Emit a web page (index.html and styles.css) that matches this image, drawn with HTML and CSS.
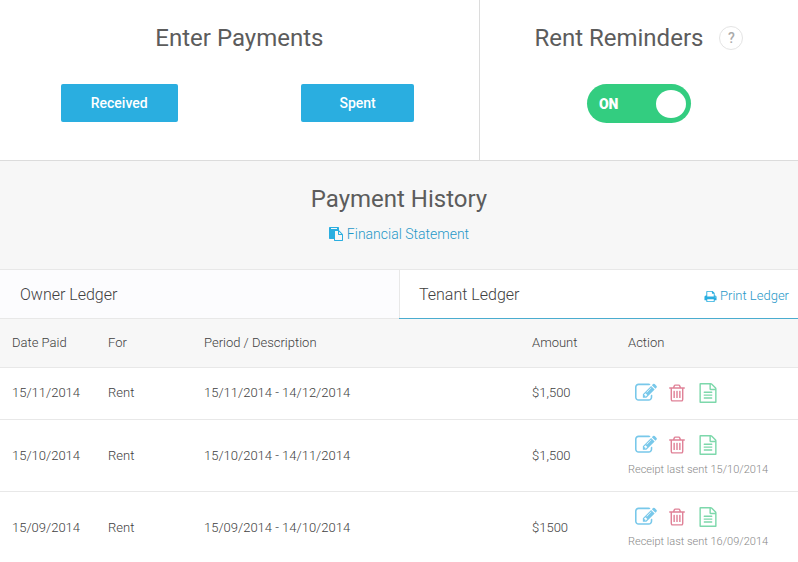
FILE: index.html
```html
<!DOCTYPE html>
<html lang="en">
<head>
<meta charset="utf-8">
<meta name="viewport" content="width=device-width, initial-scale=1">
<title>Payments</title>
<link rel="stylesheet" href="styles.css">
</head>
<body>
<svg class="sprite" aria-hidden="true">
  <symbol id="i-edit" viewBox="0 0 1792 1792"><path d="M888 1184l116-116-152-152-116 116v56h96v96h56zm440-720q-16-16-33 1l-350 350q-17 17-1 33t33-1l350-350q17-17 1-33zm80 594v190q0 119-84.5 203.5t-203.5 84.5h-832q-119 0-203.5-84.5t-84.5-203.5v-832q0-119 84.5-203.5t203.5-84.5h832q63 0 117 25 15 7 18 23 3 17-9 29l-49 49q-14 14-32 8-23-6-45-6h-832q-66 0-113 47t-47 113v832q0 66 47 113t113 47h832q66 0 113-47t47-113v-126q0-13 9-22l64-64q15-15 35-7t20 29zm-96-738l288 288-672 672h-288v-288zm444 132l-92 92-288-288 92-92q28-28 68-28t68 28l152 152q28 28 28 68t-28 68z"/></symbol>
  <symbol id="i-trash" viewBox="0 0 1792 1792"><path d="M704 736v576q0 14-9 23t-23 9h-64q-14 0-23-9t-9-23v-576q0-14 9-23t23-9h64q14 0 23 9t9 23zm256 0v576q0 14-9 23t-23 9h-64q-14 0-23-9t-9-23v-576q0-14 9-23t23-9h64q14 0 23 9t9 23zm256 0v576q0 14-9 23t-23 9h-64q-14 0-23-9t-9-23v-576q0-14 9-23t23-9h64q14 0 23 9t9 23zm128 724v-948h-896v948q0 22 7 40.5t14.5 27 10.5 8.5h832q3 0 10.5-8.5t14.5-27 7-40.5zm-672-1076h448l-48-117q-7-9-17-11h-317q-10 2-17 11zm928 32v64q0 14-9 23t-23 9h-96v948q0 83-47 143.5t-113 60.5h-832q-66 0-113-58.5t-47-141.5v-952h-96q-14 0-23-9t-9-23v-64q0-14 9-23t23-9h309l70-167q15-37 54-63t79-26h320q40 0 79 26t54 63l70 167h309q14 0 23 9t9 23z"/></symbol>
  <symbol id="i-file" viewBox="0 0 1792 1792"><path d="M1596 380q28 28 48 76t20 88v1152q0 40-28 68t-68 28h-1344q-40 0-68-28t-28-68v-1600q0-40 28-68t68-28h896q40 0 88 20t76 48zm-444-244v376h376q-10-29-22-41l-313-313q-12-12-41-22zm384 1528v-1024h-416q-40 0-68-28t-28-68v-416h-768v1536h1280zm-1024-864q0-14 9-23t23-9h704q14 0 23 9t9 23v64q0 14-9 23t-23 9h-704q-14 0-23-9t-9-23v-64zm736 224q14 0 23 9t9 23v64q0 14-9 23t-23 9h-704q-14 0-23-9t-9-23v-64q0-14 9-23t23-9h704zm0 256q14 0 23 9t9 23v64q0 14-9 23t-23 9h-704q-14 0-23-9t-9-23v-64q0-14 9-23t23-9h704z"/></symbol>
  <symbol id="i-print" viewBox="0 0 1792 1792"><path d="M448 1536h896v-256h-896v256zm0-640h896v-384h-160q-40 0-68-28t-28-68v-160h-640v640zm1152 64q0-26-19-45t-45-19-45 19-19 45 19 45 45 19 45-19 19-45zm128 0v416q0 13-9.5 22.5t-22.5 9.5h-224v160q0 40-28 68t-68 28h-960q-40 0-68-28t-28-68v-160h-224q-13 0-22.5-9.5t-9.5-22.5v-416q0-79 56.5-135.5t135.5-56.5h64v-544q0-40 28-68t68-28h672q40 0 88 20t76 48l152 152q28 28 48 76t20 88v256h64q79 0 135.5 56.5t56.5 135.5z"/></symbol>
  <symbol id="i-paste" viewBox="0 0 1792 1792"><path d="M768 1664h896v-640h-416q-40 0-68-28t-28-68v-416h-384v1152zm256-1440v-64q0-13-9.5-22.5t-22.5-9.5h-704q-13 0-22.5 9.5t-9.5 22.5v64q0 13 9.5 22.5t22.5 9.5h704q13 0 22.5-9.5t9.5-22.5zm256 672h299l-299-299v299zm512 128v672q0 40-28 68t-68 28h-960q-40 0-68-28t-28-68v-160h-544q-40 0-68-28t-28-68v-1344q0-40 28-68t68-28h1088q40 0 68 28t28 68v328q21 13 36 28l408 408q28 28 48 76t20 88z"/></symbol>
</svg>

<main>
  <div class="top">
    <section class="panel">
      <h2 class="title">Enter Payments</h2>
      <div class="enter-buttons">
        <button class="btn" type="button">Received</button>
        <button class="btn" type="button">Spent</button>
      </div>
    </section>
    <section class="panel panel-reminders">
      <div class="title-row">
        <h2 class="title" id="reminders">Rent Reminders</h2>
        <button class="help" type="button" aria-label="Help">?</button>
      </div>
      <label class="switch">
        <input class="switch-input" type="checkbox" checked aria-labelledby="reminders">
        <span class="switch-text">ON</span>
      </label>
    </section>
  </div>

  <section class="history">
    <h2 class="title">Payment History</h2>
    <a class="link" href="#statement"><svg class="icon-paste"><use href="#i-paste"/></svg>Financial Statement</a>
  </section>

  <div class="tabs">
    <div class="tab">
      <button class="tab-button" type="button">Owner Ledger</button>
    </div>
    <div class="tab tab-active">
      <button class="tab-button" type="button">Tenant Ledger</button>
      <a class="link link-print" href="#print"><svg class="icon-print"><use href="#i-print"/></svg>Print Ledger</a>
    </div>
  </div>

  <table class="ledger">
    <thead>
      <tr>
        <th class="col-small">Date Paid</th>
        <th class="col-small">For</th>
        <th>Period / Description</th>
        <th class="col-small">Amount</th>
        <th class="col-action">Action</th>
      </tr>
    </thead>
    <tbody>
      <tr>
        <td>15/11/2014</td>
        <td>Rent</td>
        <td>15/11/2014 - 14/12/2014</td>
        <td>$1,500</td>
        <td>
          <div class="actions">
            <button class="action edit" type="button" aria-label="Edit"><svg><use href="#i-edit"/></svg></button>
            <button class="action trash" type="button" aria-label="Delete"><svg><use href="#i-trash"/></svg></button>
            <button class="action file" type="button" aria-label="Receipt"><svg><use href="#i-file"/></svg></button>
          </div>
        </td>
      </tr>
      <tr>
        <td>15/10/2014</td>
        <td>Rent</td>
        <td>15/10/2014 - 14/11/2014</td>
        <td>$1,500</td>
        <td>
          <div class="actions">
            <button class="action edit" type="button" aria-label="Edit"><svg><use href="#i-edit"/></svg></button>
            <button class="action trash" type="button" aria-label="Delete"><svg><use href="#i-trash"/></svg></button>
            <button class="action file" type="button" aria-label="Receipt"><svg><use href="#i-file"/></svg></button>
          </div>
          <p class="note">Receipt last sent 15/10/2014</p>
        </td>
      </tr>
      <tr>
        <td>15/09/2014</td>
        <td>Rent</td>
        <td>15/09/2014 - 14/10/2014</td>
        <td>$1500</td>
        <td>
          <div class="actions">
            <button class="action edit" type="button" aria-label="Edit"><svg><use href="#i-edit"/></svg></button>
            <button class="action trash" type="button" aria-label="Delete"><svg><use href="#i-trash"/></svg></button>
            <button class="action file" type="button" aria-label="Receipt"><svg><use href="#i-file"/></svg></button>
          </div>
          <p class="note">Receipt last sent 16/09/2014</p>
        </td>
      </tr>
    </tbody>
  </table>
</main>
</body>
</html>
```
FILE: styles.css
```css
* {
  box-sizing: border-box;
}

body {
  margin: 0;
  background: #fff;
  color: #404040;
  font: 300 14px/20px Roboto, "Liberation Sans", sans-serif;
}

button {
  padding: 0;
  border: 0;
  background: none;
  color: inherit;
  font: inherit;
  cursor: pointer;
}

svg {
  display: block;
  fill: currentColor;
}

.sprite {
  display: none;
}

/* Top panels */
.top {
  display: grid;
  grid-template-columns: 3fr 2fr;
  border-bottom: 1px solid #dcdcdc;
}

.panel {
  display: flex;
  flex-direction: column;
  align-items: center;
  gap: 31px;
  padding: 23px 0 38px;
}

.panel-reminders {
  border-left: 1px solid #dcdcdc;
}

.title {
  margin: 0;
  color: #5c5c5c;
  font-size: 24px;
  font-weight: 400;
  line-height: 30px;
}

.title-row {
  display: flex;
  align-items: center;
  gap: 16px;
}

.help {
  width: 24px;
  height: 24px;
  border: 1px solid #e4e4e4;
  border-radius: 50%;
  color: #aaa;
  font-size: 14px;
  font-weight: 500;
  line-height: 22px;
}

.enter-buttons {
  display: grid;
  grid-template-columns: 1fr 1fr;
  justify-items: center;
  width: 100%;
  padding-right: 2px;
}

.btn {
  min-width: 113px;
  height: 38px;
  padding: 0 30px;
  border-radius: 2px;
  background: #2aaee0;
  color: #fff;
  font-weight: 500;
}

.switch {
  display: grid;
  align-items: center;
  cursor: pointer;
}

.switch-input,
.switch-text {
  grid-area: 1 / 1;
}

.switch-input {
  appearance: none;
  display: flex;
  align-items: center;
  justify-content: flex-start;
  width: 104px;
  height: 39px;
  margin: 0;
  padding: 0 5px;
  border-radius: 20px;
  background: #bbb;
}

.switch-input::before {
  content: "";
  width: 30px;
  height: 28px;
  border-radius: 50%;
  background: #fff;
}

.switch-input:checked {
  justify-content: flex-end;
  background: #33cd80;
}

.switch-text {
  padding-left: 12px;
  color: #fff;
  font-weight: 900;
}

/* The switch is one pixel taller than the buttons beside it */
.panel-reminders {
  padding-bottom: 37px;
}

/* History heading */
.history {
  display: flex;
  flex-direction: column;
  align-items: center;
  gap: 10px;
  padding: 23px 0 25px;
  border-bottom: 1px solid #e8e8e8;
  background: #f7f7f7;
}

.link {
  display: flex;
  align-items: center;
  gap: 4px;
  color: #1f98c8;
  text-decoration: none;
}

.link svg {
  color: #2aaee0;
}

.icon-paste {
  width: 14px;
  height: 14px;
}

.icon-print {
  width: 13px;
  height: 13px;
}

/* Ledger tabs */
.tabs {
  display: grid;
  grid-template-columns: 1fr 1fr;
}

.tab {
  display: flex;
  align-items: center;
  justify-content: space-between;
  height: 49px;
  padding: 2px 9px 0 20px;
  border-bottom: 1px solid #e8e8e8;
  background: #fcfcfe;
}

.tab-active {
  border-bottom-color: #4aaccf;
  background: #fff;
  box-shadow: inset 1px 0 #e8e8e8;
}

.tab-button {
  font-size: 16px;
}

.link-print {
  gap: 3px;
  padding-top: 2px;
  font-size: 13px;
}

/* Ledger table */
.ledger {
  width: 100%;
  border-collapse: separate;
  border-spacing: 0;
  table-layout: fixed;
  font-size: 13px;
}

.ledger th,
.ledger td {
  padding: 14px 0 13px 12px;
  border-bottom: 1px solid #e8e8e8;
  text-align: left;
  vertical-align: middle;
}

.ledger th {
  padding-bottom: 14px;
  background: #f7f7f7;
  font-weight: 300;
}

.ledger tbody tr:first-child td {
  padding-bottom: 15px;
}

.ledger tr:last-child td {
  padding-bottom: 12px;
}

.ledger tbody tr:last-child td {
  border-bottom: 0;
}

.ledger thead tr th {
  padding-bottom: 14px;
}

.col-small {
  width: 96px;
}

.col-action {
  width: 182px;
}

.actions {
  display: flex;
  gap: 9px;
  padding-left: 7px;
}

.action {
  display: grid;
  place-items: center;
  width: 22px;
  height: 22px;
}

.action svg {
  width: 20px;
  height: 20px;
}

.ledger .edit svg {
  width: 22px;
  height: 22px;
}

.edit {
  color: #78c8ea;
}

.trash {
  color: #e08298;
}

.file {
  color: #7dd8ab;
}

.note {
  margin: 6px 0 0;
  color: #888;
  font-size: 11px;
  line-height: 16px;
}
```
